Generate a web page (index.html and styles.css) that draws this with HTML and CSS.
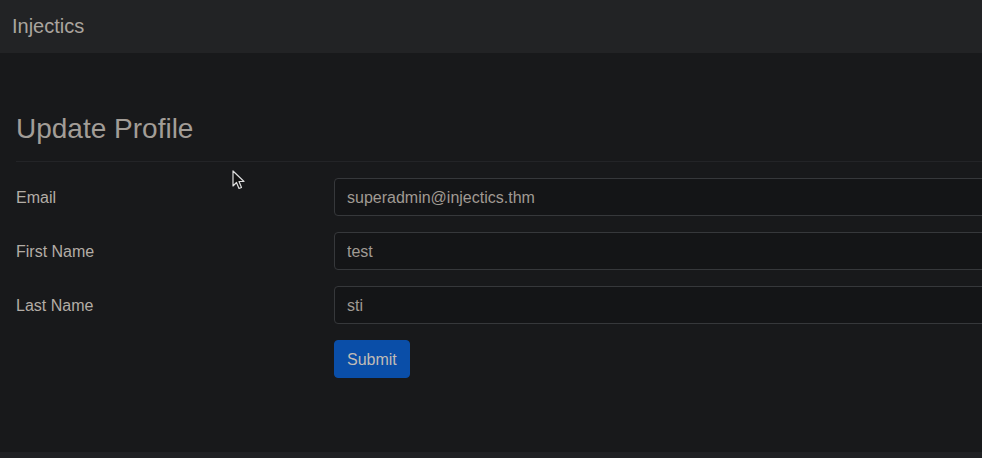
FILE: index.html
```html
<!DOCTYPE html>
<html lang="en">
<head>
<meta charset="utf-8">
<title>Injectics - Update Profile</title>
<link rel="stylesheet" href="styles.css">
</head>
<body>
<nav class="navbar">
  <span class="brand">Injectics</span>
</nav>
<main class="container">
  <h3 class="title">Update Profile</h3>
  <hr class="divider">
  <form class="form">
    <div class="row">
      <label class="label" for="email">Email</label>
      <input class="input" id="email" type="text" value="superadmin@injectics.thm">
    </div>
    <div class="row">
      <label class="label" for="fname">First Name</label>
      <input class="input" id="fname" type="text" value="test">
    </div>
    <div class="row">
      <label class="label" for="lname">Last Name</label>
      <input class="input" id="lname" type="text" value="sti">
    </div>
    <div class="row">
      <span class="label"></span>
      <button class="btn" type="button">Submit</button>
    </div>
  </form>
</main>
<footer class="footer"></footer>
<svg class="cursor" width="14" height="22" viewBox="0 0 14 22" aria-hidden="true">
  <path d="M1 1 L1 16 L4.5 12.5 L7 18.5 L9.5 17.5 L7 11.5 L12 11.5 Z" fill="#111" stroke="#ddd" stroke-width="1.2" stroke-linejoin="round"/>
</svg>
</body>
</html>
```
FILE: styles.css
```css
html, body {
  margin: 0;
  padding: 0;
  overflow: hidden;
}
body {
  width: 982px;
  height: 458px;
  background: #18191b;
  font-family: "Liberation Sans", Arial, sans-serif;
  color: #b3ada6;
  display: flex;
  flex-direction: column;
  position: relative;
}
.navbar {
  height: 53px;
  background: #222325;
  display: flex;
  align-items: center;
  padding-left: 12px;
  flex-shrink: 0;
}
.brand {
  font-size: 20px;
  color: #aaa59f;
}
.container {
  flex: 1;
  padding: 59px 0 0 16px;
  width: 1400px;
}
.title {
  margin: 0 0 8px;
  font-size: 28px;
  font-weight: 400;
  line-height: 1.2;
  color: #a29d97;
}
.divider {
  margin: 15px 0 16px;
  border: 0;
  border-top: 1px solid #232427;
}
.form {
  display: flex;
  flex-direction: column;
  gap: 16px;
}
.row {
  display: flex;
  align-items: flex-start;
}
.label {
  width: 318px;
  flex-shrink: 0;
  padding-top: 8px;
  font-size: 16px;
  line-height: 24px;
  color: #b3ada6;
}
.input {
  width: 1000px;
  height: 38px;
  box-sizing: border-box;
  padding: 7px 12px 5px;
  font-family: inherit;
  font-size: 16px;
  line-height: 24px;
  color: #a09a93;
  background: #141517;
  border: 1px solid #36383b;
  border-radius: 4px;
  outline: none;
}
.btn {
  height: 38px;
  padding: 7px 12px 5px;
  font-family: inherit;
  font-size: 16px;
  line-height: 24px;
  color: #c0bcb6;
  background: #0a4ea8;
  border: 1px solid #0a4ea8;
  border-radius: 4px;
}
.footer {
  height: 6px;
  background: #202124;
  flex-shrink: 0;
}
.cursor {
  position: absolute;
  left: 232px;
  top: 170px;
}
```
